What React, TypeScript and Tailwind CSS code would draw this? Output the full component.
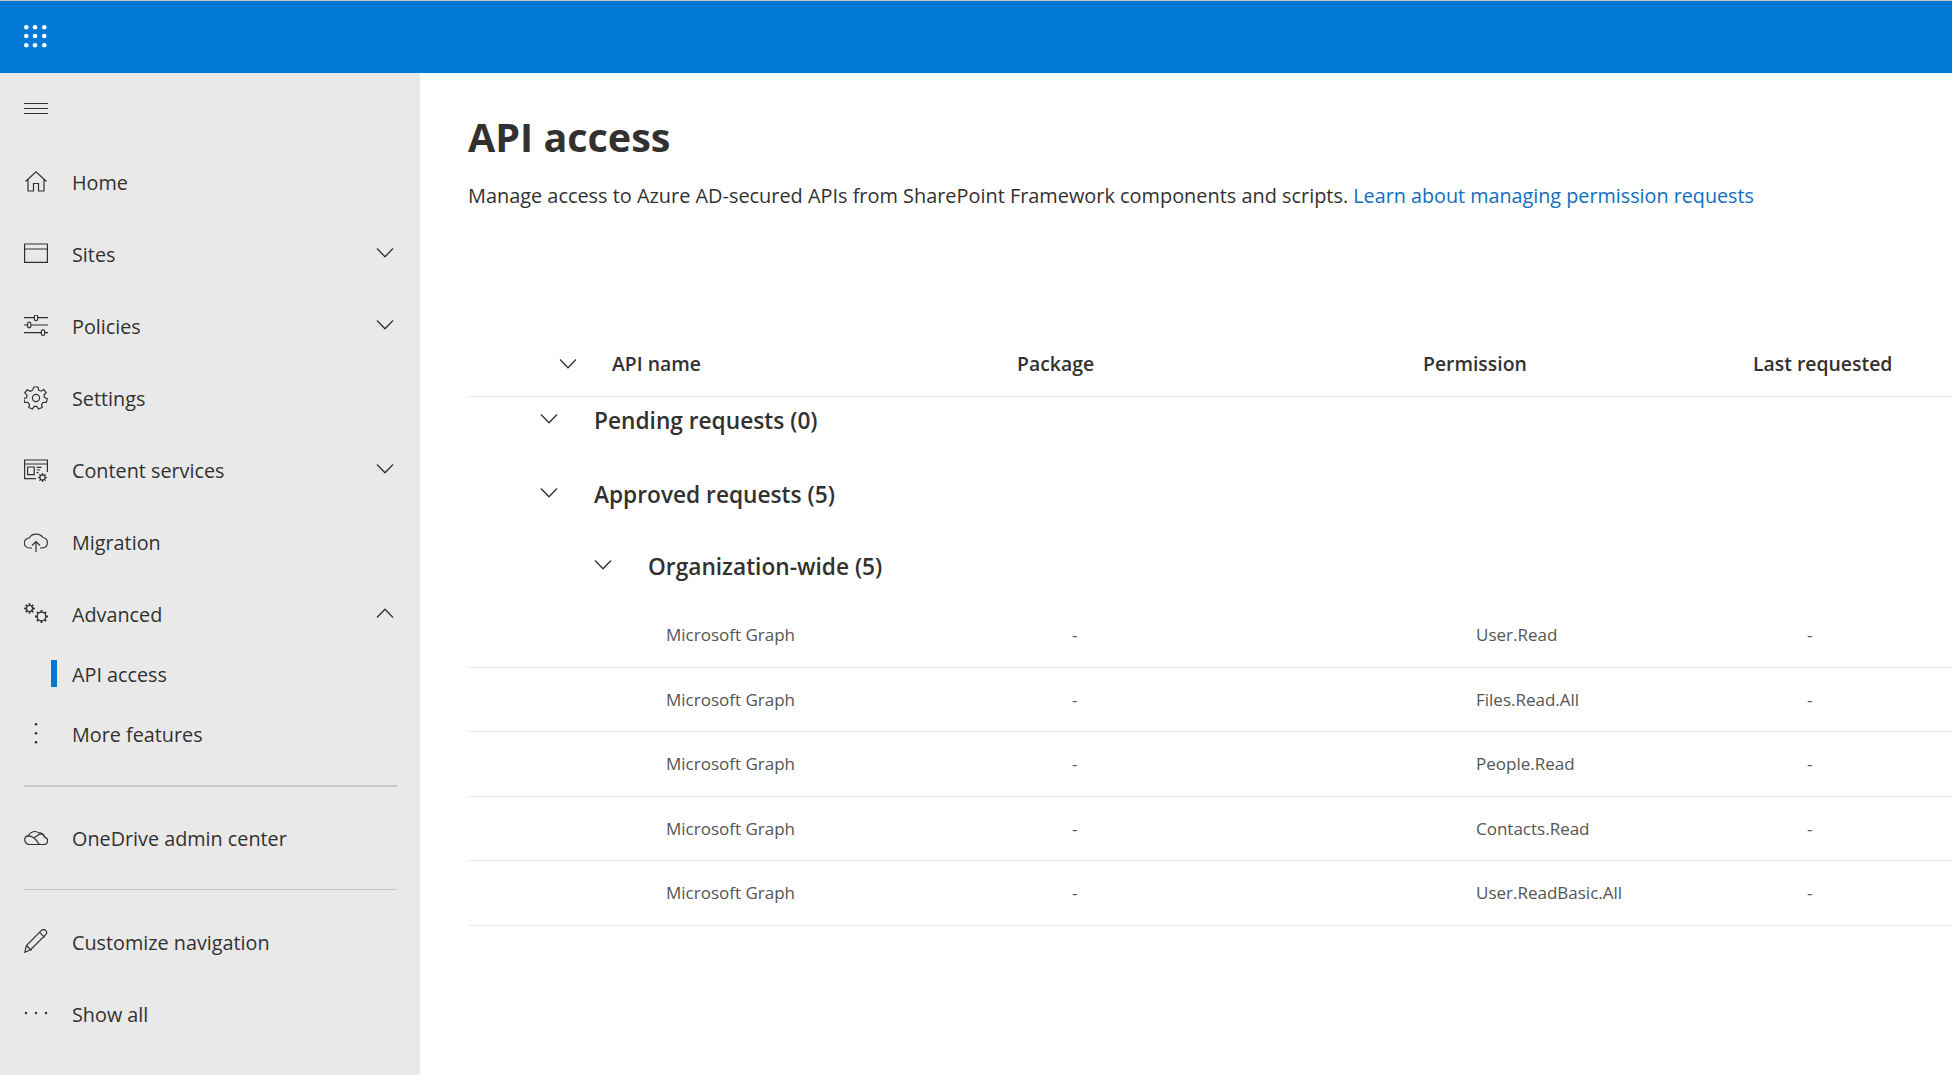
import React from "react";

const S = ({ children, className = "" }: { children: React.ReactNode; className?: string }) => (
  <svg viewBox="0 0 24 24" fill="none" stroke="#323130" strokeWidth="1.2" className={"h-6 w-6 shrink-0 " + className}>
    {children}
  </svg>
);

const icons: Record<string, React.ReactNode> = {
  home: (
    <S className="-translate-y-px">
      <path d="M1.5 11.5 12 1.8l10.5 9.7M4 9.500V21h5.500v-7.500h5V21H20V9.500" />
    </S>
  ),
  sites: (
    <S>
      <path d="M.6 1h22.800v18.400H.6zM.6 6h22.800" />
    </S>
  ),
  policies: (
    <S>
      <path d="M0 2.700h10M14 2.700h10M0 10h3M7 10h17M0 17.700h17M21 17.700h3" />
      <rect x="10.300" y="0" width="3.400" height="5.600" rx="1.700" />
      <rect x="3.500" y="7.200" width="3.400" height="5.600" rx="1.700" />
      <rect x="17.300" y="14.900" width="3.400" height="5.600" rx="1.700" />
    </S>
  ),
  settings: (
    <S className="-translate-y-px">
      <circle cx="12" cy="12" r="3.600" />
      <path d="M10 1h4l.7 3.200 2.200 1 2.900-1.600 2.400 3-2.200 2.400.4 2.400 2.900 1.400-1 3.700-3.200-.1-1.600 1.900.7 3.200-3.600 1.500-1.900-2.700h-2.400l-1.900 2.700-3.600-1.500.7-3.200-1.600-1.900-3.200.1-1-3.700L2.600 11.600 3 9.200.8 6.800l2.400-3L6.100 5.400l2.200-1z" />
    </S>
  ),
  content: (
    <S>
      <path d="M12 19.600H.6V1h22.800v12M.6 5h22.800" />
      <path d="M3.600 8h6.600v7.600H3.600zM12.600 8.400h5M12.600 11h3.500M12.600 13.600h2" />
      <circle cx="18.500" cy="18.500" r="2.600" />
      <path d="M18.500 14v1.900M18.500 21.100V23M14 18.500h1.900M21.100 18.500H23M15.400 15.400l1.300 1.300M20.300 20.300l1.300 1.300M15.400 21.600l1.300-1.300M20.300 16.700l1.300-1.300" />
    </S>
  ),
  migration: (
    <S>
      <path d="M8 17H5.500a5 5 0 0 1-.4-10A8.500 8.500 0 0 1 19 6.500a5.300 5.300 0 0 1-.5 10.500H16" />
      <path d="M12 21V11M8 14.500l4-4 4 4" />
    </S>
  ),
  advanced: (
    <S>
      <circle cx="5.500" cy="5.500" r="3" />
      <path strokeWidth="1.800" d="M5.500 .2v2.300M5.500 8.500v2.300M.2 5.500h2.300M8.500 5.500h2.300M1.800 1.800l1.600 1.600M7.600 7.600l1.600 1.600M1.800 9.200l1.600-1.600M7.600 3.400l1.600-1.600" />
      <circle cx="17.500" cy="13.500" r="4.300" />
      <path strokeWidth="1.800" d="M17.500 7v2.200M17.500 17.800V20M11 13.500h2.200M21.800 13.500H24M12.900 8.900l1.600 1.600M20.500 16.500l1.600 1.600M12.900 18.100l1.600-1.600M20.500 10.500l1.600-1.600" />
    </S>
  ),
  onedrive: (
    <S className="-translate-y-0.5">
      <path d="M5.500 19.500h14.300a3.700 3.700 0 0 0 .9-7.300A6 6 0 0 0 15 7.900 7 7 0 0 0 4.500 10.600C2 11 .7 13 .7 15s1.800 4.500 4.800 4.500z" />
      <path d="M3 11c4-.5 8.500 2 12 8.200M9.500 13.300 15 9.500c2-1.300 4.500-.5 5.700 2.700" />
    </S>
  ),
  customize: (
    <S className="-translate-y-0.5">
      <path d="M.8 23.200 2.400 16.500 17.500 1.400c1.300-1.300 3.200-1 4.200 0s1.300 2.900 0 4.200L6.600 20.700zM2.400 16.500l5.100 5M15.500 3.400l5.100 5" />
    </S>
  ),
};

const Dots = ({ vertical }: { vertical?: boolean }) => (
  <svg viewBox="0 0 24 24" fill="#323130" className="h-6 w-6 shrink-0">
    {vertical ? (
      <>
        <circle cx="12" cy="1.300" r="1.300" />
        <circle cx="12" cy="10.300" r="1.300" />
        <circle cx="12" cy="19.300" r="1.300" />
      </>
    ) : (
      <>
        <circle cx="2" cy="10" r="1.200" />
        <circle cx="12" cy="10" r="1.200" />
        <circle cx="22" cy="10" r="1.200" />
      </>
    )}
  </svg>
);

const Chevron = ({ up, className = "" }: { up?: boolean; className?: string }) => (
  <svg viewBox="0 0 18 10" fill="none" stroke="#323130" strokeWidth="1.300" className={"h-[10px] w-[18px] shrink-0 " + className}>
    <path d={up ? "M1 9.500 9 1.200l8 8.300" : "M1 .5l8 8.300 8-8.300"} />
  </svg>
);

const NavRow = ({ icon, label, chevron }: { icon: React.ReactNode; label: string; chevron?: "up" | "down" }) => (
  <div className="flex h-[72px] items-center pl-6 pr-[26px]">
    {icon}
    <span className="ml-6 flex-1 text-[19.8px] text-[#323130]">{label}</span>
    {chevron && <Chevron up={chevron === "up"} className="-translate-y-0.5" />}
  </div>
);

const rows = ["User.Read", "Files.Read.All", "People.Read", "Contacts.Read", "User.ReadBasic.All"];

export default function App() {
  return (
    <div className="flex h-[1075px] w-[1952px] flex-col overflow-hidden bg-white font-['Open_Sans','Noto_Sans',sans-serif]">
      <header className="h-[73px] shrink-0 border-t border-t-[#c8c8c8] bg-[#0078d4] pl-[24px] pt-[24px]">
        <svg viewBox="0 0 24 24" fill="#fff" className="h-6 w-6">
          {[2.3, 11, 20.3].map((y) =>
            [2.3, 11, 20.3].map((x) => <circle key={x + "-" + y} cx={x} cy={y} r="2.300" />)
          )}
        </svg>
      </header>
      <div className="flex min-h-0 flex-1">
        <aside className="flex w-[420px] shrink-0 flex-col bg-[#e9e9e9]">
          <div className="flex h-[74px] shrink-0 items-center pb-[4px] pl-6">
            <div className="flex w-6 flex-col gap-1">
              <div className="h-px bg-[#323130]" />
              <div className="h-px bg-[#323130]" />
              <div className="h-px bg-[#323130]" />
            </div>
          </div>
          <NavRow icon={icons.home} label="Home" />
          <NavRow icon={icons.sites} label="Sites" chevron="down" />
          <NavRow icon={icons.policies} label="Policies" chevron="down" />
          <NavRow icon={icons.settings} label="Settings" />
          <NavRow icon={icons.content} label="Content services" chevron="down" />
          <NavRow icon={icons.migration} label="Migration" />
          <NavRow icon={icons.advanced} label="Advanced" chevron="up" />
          <div className="relative flex h-12 items-center pl-[72px] text-[19.8px] text-[#323130]">
            <span className="absolute left-[51px] top-[9px] h-[27px] w-[6px] bg-[#0078d4]" />
            API access
          </div>
          <NavRow icon={<Dots vertical />} label="More features" />
          <div className="mx-6 mt-[14px] h-[2px] w-[373px] shrink-0 bg-[#c8c8c8]" />
          <div className="mt-[16px]">
            <NavRow icon={icons.onedrive} label="OneDrive admin center" />
          </div>
          <div className="mx-6 mt-[14px] h-px w-[373px] shrink-0 bg-[#c8c8c8]" />
          <div className="mt-[17px]">
            <NavRow icon={icons.customize} label="Customize navigation" />
            <NavRow icon={<Dots />} label="Show all" />
          </div>
        </aside>
        <main className="min-w-0 flex-1 pl-[48px]">
          <h1 className="mt-[34px] text-[39.5px] leading-[60px] font-bold text-[#323130]">API access</h1>
          <p className="mt-[14px] text-[19.9px] leading-[30px] text-[#323130]">
            Manage access to Azure AD-secured APIs from SharePoint Framework components and scripts.{" "}
            <span className="text-[19.75px] text-[#106ebe]">Learn about managing permission requests</span>
          </p>
          <div className="mt-[120px] grid h-[66px] grid-cols-[144px_405px_406px_330px_1fr] items-center border-b border-[#e8e8e8] text-[19.4px] font-semibold text-[#323130]">
            <div className="flex justify-end pr-[35px]">
              <Chevron />
            </div>
            <div>API name</div>
            <div>Package</div>
            <div>Permission</div>
            <div>Last requested</div>
          </div>
          <div className="flex h-[46px] items-center pb-[2px] pl-[72px]">
            <Chevron />
            <span className="ml-[36px] translate-y-[2px] text-[22.7px] font-semibold text-[#323130]">Pending requests (0)</span>
          </div>
          <div className="mt-[28px] flex h-[46px] items-center pb-[2px] pl-[72px]">
            <Chevron />
            <span className="ml-[36px] translate-y-[2px] text-[22.7px] font-semibold text-[#323130]">Approved requests (5)</span>
          </div>
          <div className="mt-[26px] mb-[14px] flex h-[46px] items-center pb-[2px] pl-[126px]">
            <Chevron />
            <span className="ml-[36px] translate-y-[2px] text-[22.7px] font-semibold text-[#323130]">Organization-wide (5)</span>
          </div>
          {rows.map((r) => (
            <div
              key={r}
              className="grid h-[64.5px] grid-cols-[198px_406px_404px_331px_1fr] items-center border-b border-[#e8e8e8] text-[17px] text-[#555555]"
            >
              <div />
              <div>Microsoft Graph</div>
              <div>-</div>
              <div>{r}</div>
              <div>-</div>
            </div>
          ))}
        </main>
      </div>
    </div>
  );
}
